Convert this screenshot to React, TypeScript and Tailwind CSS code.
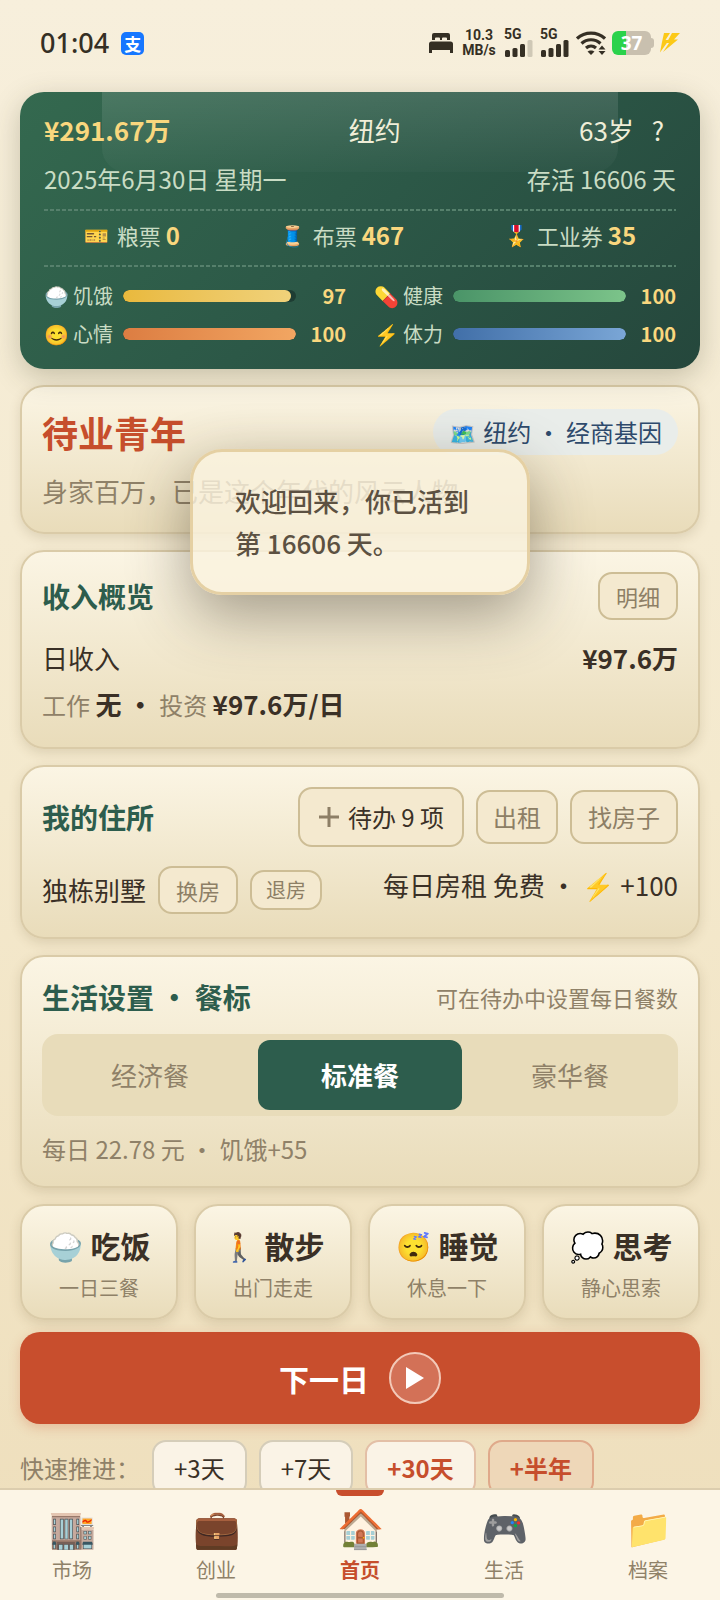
import type { ReactNode } from "react";
import clsx from "clsx";

const tickets = [
  { icon: "🎫", label: "粮票", value: 0 },
  { icon: "🧵", label: "布票", value: 467 },
  { icon: "🎖️", label: "工业券", value: 35 },
];

const stats = [
  { icon: "🍚", label: "饥饿", value: 97, bar: "from-[#e9b93c] to-[#f0d27a]" },
  { icon: "💊", label: "健康", value: 100, bar: "from-[#4a9468] to-[#7cc48a]" },
  { icon: "😊", label: "心情", value: 100, bar: "from-[#dc7d42] to-[#f2a662]" },
  { icon: "⚡", label: "体力", value: 100, bar: "from-[#416fa8] to-[#7aa6d6]" },
];

const meals = ["经济餐", "标准餐", "豪华餐"];

const actions = [
  { icon: "🍚", title: "吃饭", note: "一日三餐" },
  { icon: "🚶", title: "散步", note: "出门走走" },
  { icon: "😴", title: "睡觉", note: "休息一下" },
  { icon: "💭", title: "思考", note: "静心思索" },
];

const skips = [
  { label: "+3天", style: "border-[#d5cdb9] bg-[#faf3e6] text-[#3a3026]" },
  { label: "+7天", style: "border-[#d5cdb9] bg-[#faf3e6] text-[#3a3026]" },
  { label: "+30天", style: "border-[#e3bfa6] bg-[#faf3e6] font-bold text-[#c64e2c]" },
  { label: "+半年", style: "border-[#dfa98a] bg-[#eed7b8] font-bold text-[#c64e2c]" },
];

const tabs = [
  { icon: "🏬", label: "市场" },
  { icon: "💼", label: "创业" },
  { icon: "🏠", label: "首页" },
  { icon: "🎮", label: "生活" },
  { icon: "📁", label: "档案" },
];

function Signal({ weak }: { weak?: boolean }) {
  return (
    <div className="flex flex-col">
      <span className="font-['Roboto',sans-serif] text-[14px] leading-[11px] font-bold">5G</span>
      <svg width="29" height="17" viewBox="0 0 29 17" fill="#352f24">
        <rect x="1" y="10" width="5" height="7" rx="1.500" />
        <rect x="8.500" y="8" width="5" height="9" rx="1.500" />
        <rect x="16" y="4" width="5" height="13" rx="1.500" />
        <rect x="23.500" y="0" width="5" height="17" rx="1.500" fill={weak ? "#cfc8b6" : "#352f24"} />
      </svg>
    </div>
  );
}

function StatusBar() {
  return (
    <header className="flex h-[92px] items-center justify-between px-5 pb-[6px] font-['Noto_Sans',sans-serif] text-[#352f24]">
      <div className="flex items-center gap-3">
        <span className="text-[27px] font-medium">01:04</span>
        <span className="flex size-[23px] items-center justify-center rounded-[5px] bg-[#1677ff] font-['Noto_Sans_CJK_SC',sans-serif] text-[17px] leading-none font-bold text-white">
          支
        </span>
      </div>
      <div className="flex items-center">
        <svg width="24" height="20" viewBox="0 0 24 20" fill="#352f24">
          <path d="M3 7V2a2 2 0 0 1 2-2h14a2 2 0 0 1 2 2v5h-3V5.500a1 1 0 0 0-1-1h-3a1 1 0 0 0-1 1V7h-2V5.500a1 1 0 0 0-1-1H7a1 1 0 0 0-1 1V7z" />
          <path d="M0 20v-9a2.500 2.500 0 0 1 2.500-2.500h19A2.500 2.500 0 0 1 24 11v9h-3v-3H3v3z" />
        </svg>
        <div className="ml-[10px] flex w-8 flex-col items-center font-['Roboto',sans-serif] text-[14px] leading-[15px] font-bold">
          <span>10.3</span>
          <span>MB/s</span>
        </div>
        <div className="ml-[9px] flex gap-[7px]">
          <Signal weak />
          <Signal />
        </div>
        <svg className="ml-[7px]" width="30" height="25" viewBox="0 0 30 25" fill="none" stroke="#352f24" strokeWidth="3.200">
          <path d="M1 7.500C9 .2 21 .2 29 7.500" />
          <path d="M5.500 12.500c5.500-5 13.500-5 19 0" />
          <path d="M10 17c3-2.600 7-2.600 10 0" />
          <path d="M11.500 20.500c1.500-1.500 5.500-1.500 7 0L15 24z" fill="#352f24" stroke="none" />
          <path d="M26 14.500l3.500 4h-7zM26 24l3.500-4h-7z" fill="#352f24" stroke="none" />
        </svg>
        <div className="ml-[6px] flex items-center">
          <div className="flex h-6 w-[39px] items-center justify-center rounded-[6px] bg-linear-to-r from-[#2bd24b] from-37% to-[#c9c0af] to-37% text-[19px] leading-none font-bold text-white">
            37
          </div>
          <div className="h-[10px] w-[3px] rounded-r-sm bg-[#c9c0af]" />
        </div>
        <svg className="ml-[6px]" width="20" height="20" viewBox="0 0 20 20" fill="#fcc917">
          <path d="M4 0h6L5.500 7H9L0 19.500 2 9z" />
          <path d="M12 0h8l-6 6.500h4L3 19l6-9H6.500z" />
        </svg>
      </div>
    </header>
  );
}

function Card({ children }: { children: ReactNode }) {
  return (
    <section className="mt-4 rounded-[24px] border-2 border-[#dacba8] bg-linear-to-b from-[#fbf5e4] to-[#e9dcba] p-5 shadow-[0_4px_12px_rgba(90,70,30,0.15)]">
      {children}
    </section>
  );
}

function CardTitle({ children }: { children: ReactNode }) {
  return <h2 className="text-[28px] leading-10 font-bold text-[#2d5d4d]">{children}</h2>;
}

function Dashes() {
  return <div className="h-[2px] bg-[repeating-linear-gradient(90deg,#56806c_0_4px,transparent_4px_6px)]" />;
}

const outlineButton =
  "rounded-[14px] border-2 border-[#cdbd95] bg-[#f4e9cf] text-[#8d7f66] whitespace-nowrap";

function Summary() {
  return (
    <section className="relative overflow-hidden rounded-[24px] bg-linear-135 from-[#34694f] via-[#2c5847] to-[#25473c] px-6 pt-[18px] pb-5 text-[#c9dcc4]">
      <div className="absolute inset-x-[12%] top-0 h-20 rounded-b-[24px] bg-linear-to-b from-white/12 to-white/2" />
      <div className="relative">
        <div className="flex items-center justify-between text-[26px] leading-10 text-[#f0eed8]">
          <strong className="text-[#f9d77e]">¥291.67万</strong>
          <span>纽约</span>
          <div className="flex">
            <span>63岁</span>
            <button className="ml-[6px] w-9">?</button>
          </div>
        </div>
        <div className="mt-[13px] mb-[14px] flex justify-between text-[24px] leading-8">
          <span>2025年6月30日 星期一</span>
          <span>存活 16606 天</span>
        </div>
        <Dashes />
        <div className="flex justify-around gap-5 pt-2 pb-[14px] text-[22px] leading-8">
          {tickets.map((t) => (
            <div key={t.label} className="flex items-center">
              <span className="w-[26px] text-center text-[20px]">{t.icon}</span>
              <span className="ml-[7px]">{t.label}</span>
              <strong className="ml-[5px] text-[24px] text-[#f9d77e]">{t.value}</strong>
            </div>
          ))}
        </div>
        <Dashes />
        <div className="mt-[14px] grid grid-cols-2 gap-x-7 gap-y-2 text-[20px] leading-[30px]">
          {stats.map((s) => (
            <div key={s.label} className="flex items-center">
              <span className="w-6 text-[20px]">{s.icon}</span>
              <span className="ml-[5px]">{s.label}</span>
              <div className="ml-[10px] h-3 flex-1 overflow-hidden rounded-full bg-[#1e3d33]">
                <div className={clsx("h-full rounded-full bg-linear-to-r", s.bar)} style={{ width: `${s.value}%` }} />
              </div>
              <strong className="w-[50px] text-right text-[#f9d77e]">{s.value}</strong>
            </div>
          ))}
        </div>
      </div>
    </section>
  );
}

function Toast() {
  return (
    <div
      role="status"
      className="absolute top-[449px] left-1/2 z-20 w-[340px] -translate-x-1/2 rounded-[32px] border-3 border-[#e2cc9c]/90 bg-[#faf2df]/80 px-[42px] py-7 text-[26px] leading-[42px] font-medium text-[#5c5142] shadow-[0_20px_60px_rgba(60,50,35,0.45)]"
    >
      欢迎回来，你已活到
      <br />第 16606 天。
    </div>
  );
}

export default function App() {
  return (
    <div className="relative flex h-screen flex-col bg-linear-to-b from-[#f7efdc] via-[#f4e9cd] to-[#eedebb] font-['Noto_Sans_CJK_SC',sans-serif] text-[#3a3026]">
      <main className="min-h-0 flex-1 overflow-hidden px-5">
        <StatusBar />
        <div className="relative z-10 rounded-[24px] shadow-[0_8px_28px_rgba(60,60,30,0.25)]">
          <Summary />
        </div>

        <Card>
          <div className="flex h-[50px] items-center justify-between">
            <h1 className="text-[36px] font-bold text-[#c64e2c]">待业青年</h1>
            <span className="flex h-[46px] items-center rounded-full bg-[#e9edea] px-4 text-[24px] whitespace-pre text-[#2e4a6c]">
              <span className="mr-[7px] text-[22px]">🗺️</span>纽约 · 经商基因
            </span>
          </div>
          <p className="mt-[14px] pb-px text-[26px] leading-10 text-[#8f8168]">身家百万，已是这个年代的风云人物</p>
        </Card>

        <Card>
          <div className="flex h-12 items-center justify-between">
            <CardTitle>收入概览</CardTitle>
            <button className={clsx(outlineButton, "h-12 px-4 text-[22px]")}>明细</button>
          </div>
          <div className="mt-[18px] flex justify-between text-[26px] leading-10">
            <span>日收入</span>
            <strong>¥97.6万</strong>
          </div>
          <p className="mt-[6px] pb-[2px] text-[24px] leading-10 text-[#8f8168]">
            工作 <strong className="text-[26px] text-[#3a3026]">无 · </strong>投资{" "}
            <strong className="text-[26px] text-[#3a3026]">¥97.6万/日</strong>
          </p>
        </Card>

        <Card>
          <div className="flex items-center justify-between">
            <CardTitle>我的住所</CardTitle>
            <div className="flex items-center gap-3 text-[24px]">
              <button className={clsx(outlineButton, "flex h-[60px] items-center gap-2 px-[18px]")}>
                <svg width="22" height="20" viewBox="0 0 22 20" stroke="#8d7f66" strokeWidth="3">
                  <path d="M11 0v20M1 10h20" />
                </svg>
                <span className="text-[#3a3026]">待办 9 项</span>
              </button>
              <button className={clsx(outlineButton, "h-[54px] px-[15px]")}>出租</button>
              <button className={clsx(outlineButton, "h-[54px] px-4")}>找房子</button>
            </div>
          </div>
          <div className="mt-[18px] flex h-[52px] items-start justify-between text-[26px] leading-10">
            <div className="flex h-[50px] items-center gap-3">
              <span>独栋别墅</span>
              <button className={clsx(outlineButton, "h-12 px-4 text-[22px]")}>换房</button>
              <button className={clsx(outlineButton, "h-10 px-[14px] text-[20px] leading-none")}>退房</button>
            </div>
            <span>每日房租 免费 · ⚡ +100</span>
          </div>
        </Card>

        <Card>
          <div className="flex items-center justify-between">
            <CardTitle>生活设置 · 餐标</CardTitle>
            <span className="text-[22px] text-[#8f8168]">可在待办中设置每日餐数</span>
          </div>
          <div className="mt-[17px] grid grid-cols-3 gap-[6px] rounded-[16px] bg-[#e8dcba] p-[6px] text-[26px]">
            {meals.map((meal) => (
              <button
                key={meal}
                className={clsx(
                  "h-[70px] rounded-[12px] pb-[2px]",
                  meal === "标准餐" ? "bg-[#2d5d4d] font-bold text-white" : "text-[#8f8168]"
                )}
              >
                {meal}
              </button>
            ))}
          </div>
          <p className="mt-4 text-[24px] leading-[34px] text-[#8f8168]">每日 22.78 元 · 饥饿+55</p>
        </Card>

        <div className="mt-4 grid grid-cols-4 gap-4">
          {actions.map((a) => (
            <button
              key={a.title}
              className="flex flex-col items-center rounded-[24px] border-2 border-[#dacba8] bg-linear-to-b from-[#fbf5e4] to-[#e9dcba] pt-[17px] pb-[15px] shadow-[0_4px_12px_rgba(90,70,30,0.15)]"
            >
              <span className="flex items-center gap-2 text-[30px] leading-[44px] font-bold">
                <span className="text-[28px]">{a.icon}</span>
                {a.title}
              </span>
              <span className="mt-[6px] text-[20px] leading-[30px] text-[#8f8168]">{a.note}</span>
            </button>
          ))}
        </div>

        <button className="mt-3 flex h-[92px] w-full items-center justify-center gap-5 rounded-[20px] bg-[#c84e2d] text-[30px] font-bold text-white shadow-[0_4px_12px_rgba(200,78,45,0.25)]">
          下一日
          <span className="flex size-[52px] items-center justify-center rounded-full border-2 border-[#f3c9b8] bg-white/20">
            <svg width="18" height="22" viewBox="0 0 18 22" fill="#fff">
              <path d="M0 0l18 11L0 22z" />
            </svg>
          </span>
        </button>

        <div className="mt-4 flex items-center gap-3 text-[24px] whitespace-nowrap">
          <span className="text-[#8f8168]">快速推进：</span>
          {skips.map((s) => (
            <button key={s.label} className={clsx("h-14 rounded-[14px] border-2 px-5", s.style)}>
              {s.label}
            </button>
          ))}
        </div>
      </main>

      <nav className="relative grid h-28 grid-cols-5 border-t-2 border-[#dccdae] bg-[#fcf5e6]">
        {tabs.map((tab) => {
          const active = tab.label === "首页";
          return (
            <a
              key={tab.label}
              href="#"
              className={clsx("flex flex-col items-center", active ? "font-bold text-[#c64e2c]" : "text-[#8f8168]")}
            >
              <span className={clsx("h-[6px] w-12 rounded-b-md", active && "bg-[#c84e2d]")} />
              <span className="mt-[6px] text-[38px] leading-[48px]">{tab.icon}</span>
              <span className="mt-[5px] text-[20px] leading-[30px]">{tab.label}</span>
            </a>
          );
        })}
        <div className="absolute bottom-[2px] left-1/2 h-[5px] w-2/5 -translate-x-1/2 rounded-full bg-[#bfbaab]" />
      </nav>

      <Toast />
    </div>
  );
}
